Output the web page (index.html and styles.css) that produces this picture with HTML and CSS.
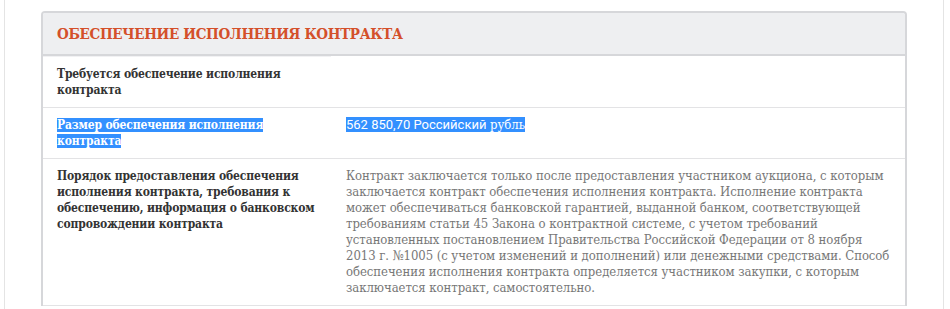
FILE: index.html
```html
<!DOCTYPE html>
<html lang="ru">
<head>
<meta charset="utf-8">
<title>Обеспечение исполнения контракта</title>
<link rel="stylesheet" href="styles.css">
</head>
<body>
<div class="page">
  <section class="card">
    <header class="card-head">
      <h2 class="card-title">ОБЕСПЕЧЕНИЕ ИСПОЛНЕНИЯ КОНТРАКТА</h2>
    </header>
    <div class="row first">
      <div class="label">Требуется обеспечение исполнения контракта</div>
      <div class="value"></div>
    </div>
    <div class="row">
      <div class="label"><span class="sel">Размер обеспечения исполнения контракта</span></div>
      <div class="value"><span class="sel"><span class="sans">562 850,70 Российский</span> рубль</span></div>
    </div>
    <div class="row">
      <div class="label">Порядок предоставления обеспечения исполнения контракта, требования к обеспечению, информация о банковском сопровождении контракта</div>
      <div class="value muted">Контракт заключается только после предоставления участником аукциона, с которым заключается контракт обеспечения исполнения контракта. Исполнение контракта может обеспечиваться банковской гарантией, выданной банком, соответствующей требованиям статьи 45 Закона о контрактной системе, с учетом требований установленных постановлением Правительства Российской Федерации от 8 ноября 2013 г. №1005 (с учетом изменений и дополнений) или денежными средствами. Способ обеспечения исполнения контракта определяется участником закупки, с которым заключается контракт, самостоятельно.</div>
    </div>
  </section>
</div>
</body>
</html>
```
FILE: styles.css
```css
html, body {
  margin: 0;
  background: #ffffff;
}
body {
  font-family: "DejaVu Serif", "Liberation Serif", serif;
  font-stretch: semi-condensed;
  font-size: 13px;
  line-height: 16px;
  letter-spacing: -0.06px;
  color: #333333;
}
.page {
  box-sizing: border-box;
  width: 940px;
  min-height: 309px;
  margin-left: 4px;
  padding: 11px 36px 0 36px;
  border-left: 1px solid #e4e4e4;
  border-right: 1px solid #e4e4e4;
}
.card {
  border: 2px solid #d6d7da;
  border-bottom: none;
  border-radius: 4px 4px 0 0;
  background: #ffffff;
}
.card-head {
  display: flex;
  align-items: center;
  height: 41px;
  padding: 0 14px;
  background: #eeeff1;
  border-bottom: 2px solid #d6d7da;
  border-radius: 2px 2px 0 0;
}
.card-title {
  margin: 0;
  font-size: 15px;
  line-height: 20px;
  font-weight: 700;
  color: #d4502a;
  letter-spacing: -0.35px;
}
.row {
  display: grid;
  grid-template-columns: 288px 1fr;
  border-bottom: 1px solid #e3e3e5;
}
.label {
  padding: 9px 10px 9px 14px;
  font-weight: 700;
  font-size: 12px;
  letter-spacing: -0.15px;
  color: #333333;
}
.row.first .label {
  border-top: 1px solid #f1f1f3;
}
.value {
  padding: 9px 15px;
}
.muted {
  color: #777777;
}
.sel {
  background: #3390ff;
  color: #ffffff;
}
.sans {
  font-family: Roboto, "Liberation Sans", sans-serif;
  font-stretch: normal;
  letter-spacing: 0;
}
```
